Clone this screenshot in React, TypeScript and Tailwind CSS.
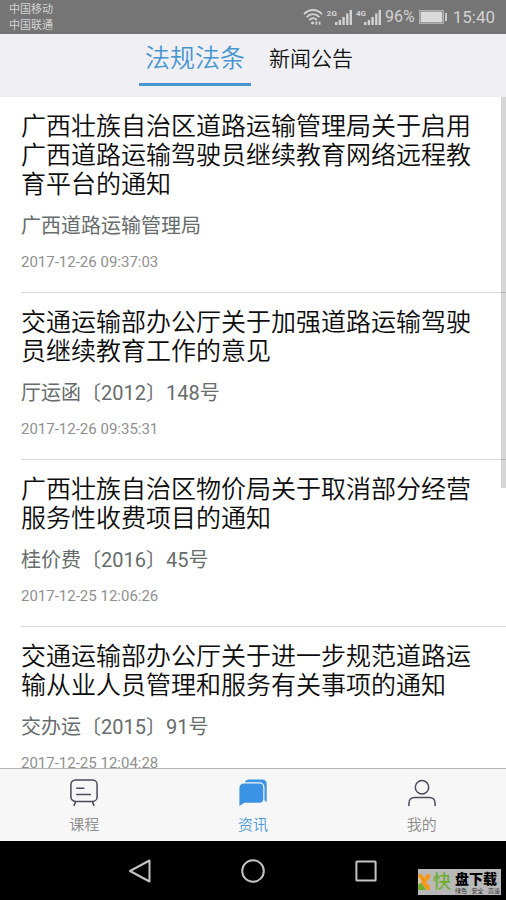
import React from 'react';
import clsx from 'clsx';

interface Article {
  title: string;
  source: string;
  date: string;
}

const articles: Article[] = [
  {
    title: '广西壮族自治区道路运输管理局关于启用广西道路运输驾驶员继续教育网络远程教育平台的通知',
    source: '广西道路运输管理局',
    date: '2017-12-26 09:37:03',
  },
  {
    title: '交通运输部办公厅关于加强道路运输驾驶员继续教育工作的意见',
    source: '厅运函〔2012〕148号',
    date: '2017-12-26 09:35:31',
  },
  {
    title: '广西壮族自治区物价局关于取消部分经营服务性收费项目的通知',
    source: '桂价费〔2016〕45号',
    date: '2017-12-25 12:06:26',
  },
  {
    title: '交通运输部办公厅关于进一步规范道路运输从业人员管理和服务有关事项的通知',
    source: '交办运〔2015〕91号',
    date: '2017-12-25 12:04:28',
  },
];

const WifiIcon = () => (
  <svg className="w-5 h-[18px]" viewBox="0 0 20 18" fill="none" stroke="#d2d2d2" strokeWidth="1.8">
    <path d="M1 6.2C6 .6 14 .6 19 6.2" />
    <path d="M3.6 9.2c3.8-4 9-4 12.8 0" />
    <path d="M6.2 12c2.4-2.4 5.2-2.4 7.6 0" />
    <circle cx="9.6" cy="15" r="1.6" fill="#d2d2d2" stroke="none" />
    <path d="M13.4 16.8v-3.4M16.6 16.8v-3.4" strokeWidth="1.8" />
  </svg>
);

const Signal: React.FC<{ label: string }> = ({ label }) => (
  <div className="flex items-start">
    <span className="text-[8px] leading-[9px] font-bold">{label}</span>
    <svg className="w-[17px] h-4 -ml-0.5" viewBox="0 0 17 16" fill="#d2d2d2">
      <rect x="0" y="13" width="2.4" height="3" />
      <rect x="3.7" y="11" width="2.4" height="5" />
      <rect x="7.4" y="8" width="2.4" height="8" />
      <rect x="11.1" y="4.5" width="2.4" height="11.5" />
      <rect x="14.6" y="1" width="2.4" height="15" />
    </svg>
  </div>
);

const BatteryIcon = () => (
  <svg className="w-7 h-[14px]" viewBox="0 0 28 14" fill="none">
    <rect x=".5" y=".5" width="24" height="13" stroke="#b0b0b0" />
    <rect x="1.6" y="1.6" width="21.8" height="10.8" fill="#dadada" />
    <rect x="26" y="3" width="2" height="8" fill="#c8c8c8" />
  </svg>
);

const StatusBar = () => (
  <header className="flex h-[34px] shrink-0 items-center justify-between bg-[#757575] pl-[9px] pr-[11px] text-[#d2d2d2]">
    <div className="pt-0.5 text-[11px] leading-4">
      <div>中国移动</div>
      <div>中国联通</div>
    </div>
    <div className="flex items-center">
      <WifiIcon />
      <div className="ml-1 flex gap-1">
        <Signal label="2G" />
        <Signal label="4G" />
      </div>
      <span className="mx-1 text-[16px] leading-5">96%</span>
      <BatteryIcon />
      <span className="ml-1.5 text-[17px] leading-5">15:40</span>
    </div>
  </header>
);

const ArticleItem: React.FC<{ article: Article }> = ({ article }) => (
  <li className="ml-[21px] border-b border-[#d6d6d6] pt-[15px] pb-5">
    <a href="#" className="block">
      <h2 className="pr-6 text-[25px] leading-[29px] font-[350] text-[#0c0c0c]">{article.title}</h2>
      <p className="mt-[15px] text-[20px] leading-6 text-[#666b6b]">{article.source}</p>
      <time className="mt-3.5 block text-[15px] leading-5 text-[#8f8f8f]">{article.date}</time>
    </a>
  </li>
);

const CourseIcon = () => (
  <svg className="size-7" viewBox="0 0 28 28" fill="none" stroke="#4a4a5c" strokeWidth="1.5" strokeLinecap="round">
    <rect x=".9" y="1" width="26.2" height="21.4" rx="4.5" />
    <path d="M6.8 9.2h7M6.8 15.4h13.6M5.6 22.6l-1.5 3.8M22.4 22.6l1.5 3.8" />
  </svg>
);

const NewsIcon = () => (
  <svg className="size-7" viewBox="0 0 28 28" fill="#3a93e4">
    <path d="M4.8 4.6h15.5a4 4 0 0 1 4 4v11.2a4 4 0 0 1-4 4H5.2L.4 27V8.8a4.2 4.2 0 0 1 4.4-4.2z" />
    <path d="M5.8 3.2C6.5 1.4 8 .6 10 .6h13.4a4.3 4.3 0 0 1 4.3 4.3v18l-2.2-1.3V8.2a5 5 0 0 0-5-5z" />
  </svg>
);

const MineIcon = () => (
  <svg className="size-7" viewBox="0 0 28 28" fill="none" stroke="#4a4a5c" strokeWidth="1.5" strokeLinecap="round">
    <circle cx="14" cy="8.3" r="6.7" />
    <path d="M.9 26.6v-2.2c0-3.6 2.2-5.9 5.8-5.9h14.6c3.6 0 5.8 2.3 5.8 5.9v2.2" />
  </svg>
);

const tabs = [
  { label: '课程', icon: <CourseIcon />, active: false },
  { label: '资讯', icon: <NewsIcon />, active: true },
  { label: '我的', icon: <MineIcon />, active: false },
];

const SystemNav = () => (
  <div className="grid h-[59px] shrink-0 grid-cols-[1fr_113px_113px_113px_1fr] items-center justify-items-center bg-black">
    <span />
    <button aria-label="返回">
      <svg className="size-6" viewBox="0 0 24 24" fill="none" stroke="#c4c4c4" strokeWidth="2" strokeLinejoin="round">
        <path d="M21.5 1.5v21L2 12z" />
      </svg>
    </button>
    <button aria-label="主页">
      <svg className="size-6" viewBox="0 0 24 24" fill="none" stroke="#c4c4c4" strokeWidth="2">
        <circle cx="12" cy="12" r="10.8" />
      </svg>
    </button>
    <button aria-label="最近">
      <svg className="size-6" viewBox="0 0 24 24" fill="none" stroke="#c4c4c4" strokeWidth="2">
        <rect x="2.4" y="2.4" width="19.2" height="19.2" rx=".6" />
      </svg>
    </button>
  </div>
);

const Watermark = () => (
  <div className="absolute right-[5px] bottom-[5px] flex h-[26px] w-[83px] items-center bg-[#b9b9b9]">
    <svg className="h-[18px] w-3 shrink-0" viewBox="0 0 12 18">
      <path d="M0 1h4l2 4 3-4h3v4L8 9l4 4v4H9L4 11 0 8z" fill="#f39a1e" />
      <path d="M0 8l4 3 4 6H0z" fill="#6fae2c" />
      <path d="M0 3l4 5.5L0 12z" fill="#d3cfae" />
    </svg>
    <span className="ml-[3px] text-[18px] leading-6 font-medium text-[#6fae2c]">快</span>
    <div className="ml-1">
      <div className="text-[14px] leading-4 font-black text-black">盘下载</div>
      <div className="text-[6px] leading-[7px] whitespace-nowrap text-[#333333]">绿色 · 安全 · 高速</div>
    </div>
  </div>
);

export default function App() {
  return (
    <div className="relative flex h-screen flex-col overflow-hidden bg-white font-['Roboto','Noto_Sans_CJK_SC',sans-serif]">
      <StatusBar />

      <nav className="flex h-[63px] shrink-0 items-start justify-center gap-1 bg-[#efeff4]">
        <button className="h-[52px] w-28 border-b-3 border-[#4896d0] text-[25px] leading-8 font-[350] text-[#4896d0]">法规法条</button>
        <button className="h-[52px] w-28 border-b-3 border-transparent text-[21px] leading-8 font-[350] text-[#111111]">新闻公告</button>
      </nav>

      <main className="relative min-h-0 flex-1 overflow-hidden">
        <ul>
          {articles.map((article) => (
            <ArticleItem key={article.title} article={article} />
          ))}
        </ul>
        {/* Scroll thumb */}
        <div className="absolute top-0 right-0 h-7/12 w-[5px] bg-black/16" />
      </main>

      <nav className="grid h-[73px] shrink-0 grid-cols-3 border-t border-[#b4b4b4] bg-[#f7f7f7]">
        {tabs.map((tab) => (
          <button
            key={tab.label}
            className={clsx(
              'flex flex-col items-center pt-2.5 text-[15px] leading-5 font-[350]',
              tab.active ? 'text-[#4a97dc]' : 'text-[#8a8a8a]'
            )}
          >
            {tab.icon}
            <span className="mt-2">{tab.label}</span>
          </button>
        ))}
      </nav>

      <SystemNav />
      <Watermark />
    </div>
  );
}
